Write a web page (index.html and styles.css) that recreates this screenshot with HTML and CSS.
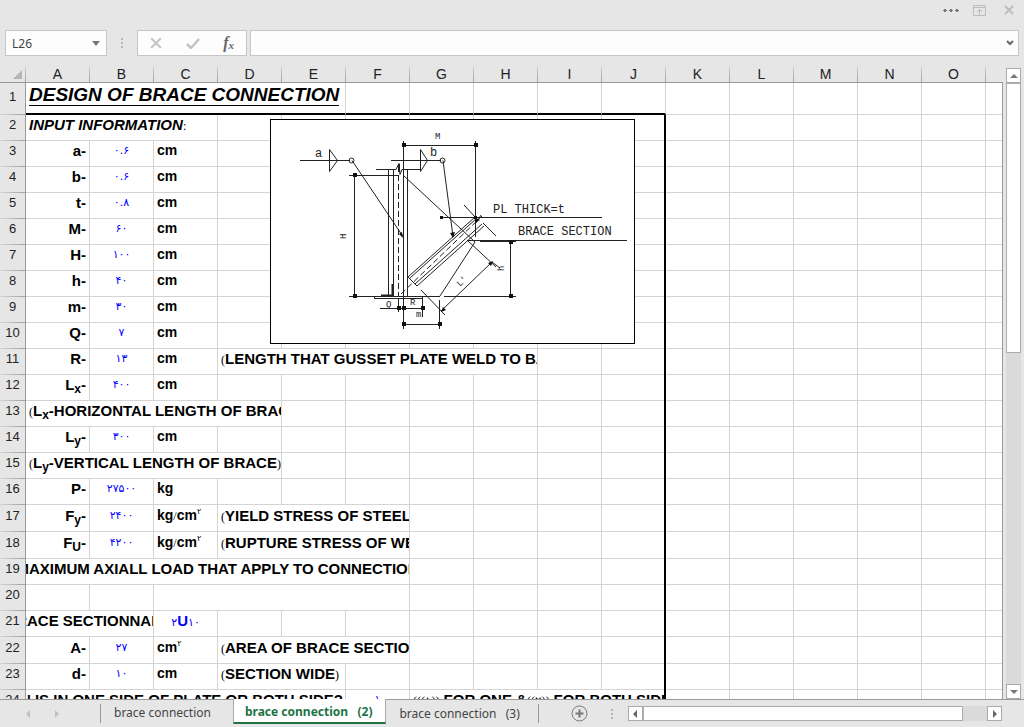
FILE: index.html
```html
<!DOCTYPE html>
<html lang="en">
<head>
  <meta charset="UTF-8" />
  <meta name="viewport" content="width=device-width, initial-scale=1" />
  <title>Brace Connection</title>
  <link rel="stylesheet" href="styles.css">
</head>
<body>

  <!-- Window controls -->
  <header class="title-bar">
    <button class="icon-btn" aria-label="More"><svg width="16" height="12" viewBox="0 0 16 12"><path d="M1 5h2v3H1zM0 6h4v1H0zM7 5h2v3H7zM6 6h4v1H6zM13 5h2v3h-2zM12 6h4v1h-4z" fill="#777"/></svg></button>
    <button class="icon-btn" aria-label="Ribbon display options"><svg width="13" height="11" viewBox="0 0 13 11" fill="none" stroke="#bdbdbd"><path d="M.5.5h12v10H.5zM.5 2.5h12M6.500 4.500v5M4 6.500l2.500-2 2.500 2"/></svg></button>
    <button class="icon-btn" aria-label="Close"><svg width="10" height="10" viewBox="0 0 10 10"><path d="M1 1l8 8M9 1l-8 8" stroke="#bdbdbd" stroke-width="2"/></svg></button>
  </header>

  <!-- Formula bar -->
  <div class="formula-bar">
    <div class="name-box">
      <input type="text" aria-label="Name box" value="L26" />
      <button class="icon-btn" aria-label="Show names"><svg width="8" height="5" viewBox="0 0 8 5"><path d="M0 0h8L4 5z" fill="#777"/></svg></button>
    </div>
    <svg class="grip" width="2" height="10" viewBox="0 0 2 10"><path d="M0 0h2v2H0zM0 4h2v2H0zM0 8h2v2H0z" fill="#b5b5b5"/></svg>
    <div class="formula-tools">
      <button class="icon-btn" aria-label="Cancel"><svg width="12" height="10" viewBox="0 0 12 10"><path d="M1 0l10 10M11 0L1 10" stroke="#c4c4c4" stroke-width="2"/></svg></button>
      <button class="icon-btn" aria-label="Enter"><svg width="14" height="11" viewBox="0 0 14 11"><path d="M1 6l4 4 8-9" fill="none" stroke="#c4c4c4" stroke-width="2.500"/></svg></button>
      <button class="icon-btn fx" aria-label="Insert function">f<small>x</small></button>
    </div>
    <div class="formula-box">
      <input type="text" aria-label="Formula" />
      <button class="icon-btn" aria-label="Expand formula bar"><svg width="8" height="6" viewBox="0 0 8 6"><path d="M1 1l3 3 3-3" fill="none" stroke="#666" stroke-width="2"/></svg></button>
    </div>
  </div>

  <main class="workspace">
    <div class="sheet">
      <table class="grid">
        <colgroup>
          <col class="col-head"><col span="15" class="col"><col>
        </colgroup>
        <thead>
          <tr><th class="corner"><svg width="9" height="9" viewBox="0 0 9 9"><path d="M9 0v9H0z" fill="#b5b5b5"/></svg></th><th>A</th><th>B</th><th>C</th><th>D</th><th>E</th><th>F</th><th>G</th><th>H</th><th>I</th><th>J</th><th>K</th><th>L</th><th>M</th><th>N</th><th>O</th><th></th></tr>
        </thead>
        <tbody>
          <tr class="title-row"><th>1</th><td colspan="5"><span class="title">DESIGN OF BRACE CONNECTION</span></td><td></td><td></td><td></td><td></td><td></td><td></td><td></td><td></td><td></td><td></td><td></td></tr>
          <tr><th>2</th><td colspan="3" class="heading">INPUT INFORMATION<i>:</i></td><td></td><td></td><td></td><td></td><td></td><td></td><td class="edge"></td><td></td><td></td><td></td><td></td><td></td><td></td></tr>
          <tr><th>3</th><td class="name">a-</td><td class="value">۰.۶</td><td class="unit">cm</td><td></td><td></td><td></td><td></td><td></td><td></td><td class="edge"></td><td></td><td></td><td></td><td></td><td></td><td></td></tr>
          <tr><th>4</th><td class="name">b-</td><td class="value">۰.۶</td><td class="unit">cm</td><td></td><td></td><td></td><td></td><td></td><td></td><td class="edge"></td><td></td><td></td><td></td><td></td><td></td><td></td></tr>
          <tr><th>5</th><td class="name">t-</td><td class="value">۰.۸</td><td class="unit">cm</td><td></td><td></td><td></td><td></td><td></td><td></td><td class="edge"></td><td></td><td></td><td></td><td></td><td></td><td></td></tr>
          <tr><th>6</th><td class="name">M-</td><td class="value">۶۰</td><td class="unit">cm</td><td></td><td></td><td></td><td></td><td></td><td></td><td class="edge"></td><td></td><td></td><td></td><td></td><td></td><td></td></tr>
          <tr><th>7</th><td class="name">H-</td><td class="value">۱۰۰</td><td class="unit">cm</td><td></td><td></td><td></td><td></td><td></td><td></td><td class="edge"></td><td></td><td></td><td></td><td></td><td></td><td></td></tr>
          <tr><th>8</th><td class="name">h-</td><td class="value">۴۰</td><td class="unit">cm</td><td></td><td></td><td></td><td></td><td></td><td></td><td class="edge"></td><td></td><td></td><td></td><td></td><td></td><td></td></tr>
          <tr><th>9</th><td class="name">m-</td><td class="value">۳۰</td><td class="unit">cm</td><td></td><td></td><td></td><td></td><td></td><td></td><td class="edge"></td><td></td><td></td><td></td><td></td><td></td><td></td></tr>
          <tr><th>10</th><td class="name">Q-</td><td class="value">۷</td><td class="unit">cm</td><td></td><td></td><td></td><td></td><td></td><td></td><td class="edge"></td><td></td><td></td><td></td><td></td><td></td><td></td></tr>
          <tr><th>11</th><td class="name">R-</td><td class="value">۱۳</td><td class="unit">cm</td><td colspan="5"><i>(</i>LENGTH THAT GUSSET PLATE WELD TO BASE PLATE<i>)</i></td><td></td><td class="edge"></td><td></td><td></td><td></td><td></td><td></td><td></td></tr>
          <tr><th>12</th><td class="name">L<sub>x</sub>-</td><td class="value">۴۰۰</td><td class="unit">cm</td><td></td><td></td><td></td><td></td><td></td><td></td><td class="edge"></td><td></td><td></td><td></td><td></td><td></td><td></td></tr>
          <tr><th>13</th><td colspan="4"><i>(</i>L<sub>x</sub>-HORIZONTAL LENGTH OF BRACE<i>)</i></td><td></td><td></td><td></td><td></td><td></td><td class="edge"></td><td></td><td></td><td></td><td></td><td></td><td></td></tr>
          <tr><th>14</th><td class="name">L<sub>y</sub>-</td><td class="value">۳۰۰</td><td class="unit">cm</td><td></td><td></td><td></td><td></td><td></td><td></td><td class="edge"></td><td></td><td></td><td></td><td></td><td></td><td></td></tr>
          <tr><th>15</th><td colspan="4" class="center"><i>(</i>L<sub>y</sub>-VERTICAL LENGTH OF BRACE<i>)</i></td><td></td><td></td><td></td><td></td><td></td><td class="edge"></td><td></td><td></td><td></td><td></td><td></td><td></td></tr>
          <tr><th>16</th><td class="name">P-</td><td class="value">۲۷۵۰۰</td><td class="unit">kg</td><td></td><td></td><td></td><td></td><td></td><td></td><td class="edge"></td><td></td><td></td><td></td><td></td><td></td><td></td></tr>
          <tr class="tall"><th>17</th><td class="name">F<sub>y</sub>-</td><td class="value">۲۴۰۰</td><td class="unit">kg<i>/</i>cm<sup>۲</sup></td><td colspan="3"><i>(</i>YIELD STRESS OF STEEL<i>)</i></td><td></td><td></td><td></td><td class="edge"></td><td></td><td></td><td></td><td></td><td></td><td></td></tr>
          <tr class="tall"><th>18</th><td class="name">F<sub>U</sub>-</td><td class="value">۴۲۰۰</td><td class="unit">kg<i>/</i>cm<sup>۲</sup></td><td colspan="3"><i>(</i>RUPTURE STRESS OF WELD<i>)</i></td><td></td><td></td><td></td><td class="edge"></td><td></td><td></td><td></td><td></td><td></td><td></td></tr>
          <tr><th>19</th><td colspan="6" class="wide"><div class="clip"><span><i>(</i>MAXIMUM AXIALL LOAD THAT APPLY TO CONNECTION<i>)</i></span></div></td><td></td><td></td><td></td><td class="edge"></td><td></td><td></td><td></td><td></td><td></td><td></td></tr>
          <tr><th>20</th><td></td><td></td><td colspan="4"></td><td></td><td></td><td></td><td class="edge"></td><td></td><td></td><td></td><td></td><td></td><td></td></tr>
          <tr><th>21</th><td colspan="2" class="wide"><div class="clip"><span>BRACE SECTIONNAME</span></div></td><td class="value">۲<b>U</b>۱۰</td><td></td><td></td><td></td><td></td><td></td><td></td><td class="edge"></td><td></td><td></td><td></td><td></td><td></td><td></td></tr>
          <tr class="tall"><th>22</th><td class="name">A-</td><td class="value">۲۷</td><td class="unit">cm<sup>۲</sup></td><td colspan="3"><i>(</i>AREA OF BRACE SECTION<i>)</i></td><td></td><td></td><td></td><td class="edge"></td><td></td><td></td><td></td><td></td><td></td><td></td></tr>
          <tr><th>23</th><td class="name">d-</td><td class="value">۱۰</td><td class="unit">cm</td><td colspan="2"><i>(</i>SECTION WIDE<i>)</i></td><td></td><td></td><td></td><td></td><td class="edge"></td><td></td><td></td><td></td><td></td><td></td><td></td></tr>
          <tr><th>24</th><td colspan="5" class="wide"><div class="clip clip-end"><span>CONNECTION IS IN ONE SIDE OF PLATE OR BOTH SIDE?</span></div></td><td class="value">۱</td><td colspan="4" class="edge"><i>(((۱))</i> FOR ONE &amp;<i>((۲))</i> FOR BOTH SIDE<i>)</i></td><td></td><td></td><td></td><td></td><td></td><td></td></tr>
        </tbody>
      </table>

      <!-- Connection drawing, floats over the cells -->
      <svg class="drawing" viewBox="271 120 363 223" role="img" aria-label="Brace connection detail">
        <g fill="none" stroke="#222" stroke-width="1">
          <!-- weld symbols and leaders -->
          <path d="M300 160.500h50M329.500 149.500v22l8-11zM391 160.500h50M420.500 149.500v22l7-11z"/>
          <circle cx="351.500" cy="160.500" r="2.500"/>
          <circle cx="442.500" cy="160.500" r="2.500"/>
          <path d="M352 160.500l51 76M443 160.500l10 76"/>
          <!-- column -->
          <path d="M376 169.500h20l3-6 1 11 2-5h18M388.500 169.500v127M393.500 169.500v127M403.500 141v188M407.500 169.500v127"/>
          <path d="M398.500 175v121" stroke-dasharray="6 3"/>
          <path d="M399 164v8M392.500 284v11M381 295.500h12" stroke-width="2"/>
          <path d="M374.500 296.500h48v2h-48z"/>
          <!-- gusset plate -->
          <path d="M403 175l72 67M467 240l29 27M475 242l-35 54" />
          <!-- brace -->
          <path d="M408 277l67-60M410 278l67-60M415 284l67-60M417 286l67-60M408 277l9 9M464 205l12 13M483 223l13 13M481 215l-5 8"/>
          <path d="M401 294l81-78" stroke-dasharray="6 3"/>
          <!-- text leaders -->
          <path d="M441 217.500h161M467 240.500h160M480 241.500h36"/>
          <!-- dimensions -->
          <path d="M403 145.500h72M475.500 141v96M349 175.500h49M354.500 175v121M349 296.500h91M444 296.500h72M510.500 241v55"/>
          <path d="M380 308.500h43M398.500 298v14M422.500 298v19M403 324.500h36M439.500 300v29M441 311l51-49M421 290l24 25M492 262l8 6"/>
        </g>
        <g fill="#111">
          <path d="M402 143h4v4h-4zM474 143h4v4h-4zM353 173h4v4h-4zM353 294h4v4h-4zM509 240h4v4h-4zM509 294h4v4h-4zM397 306h4v4h-4zM402 306h4v4h-4zM421 306h4v4h-4zM402 322h4v4h-4zM438 322h4v4h-4zM440 216h3v3h-3zM474 216h3v3h-3z"/>
          <path d="M403 238l-4-4 3-2zM453 238l-3-5 5-1zM441 312l2-5 3 3zM493 261l-5 2 3 3zM475 223l1-5 4 2z"/>
        </g>
        <g class="drawing-text">
          <text x="493" y="213">PL THICK=t</text>
          <text x="518" y="235">BRACE SECTION</text>
          <text x="315" y="157">a</text>
          <text x="430" y="156">b</text>
          <g class="drawing-small">
            <text x="435" y="139">M</text>
            <text x="386" y="307">Q</text>
            <text x="410" y="305">R</text>
            <text x="416" y="317">m</text>
            <text transform="translate(346 239) rotate(-90)">H</text>
            <text transform="translate(460 287) rotate(-45)">L'</text>
            <text transform="translate(504 271) rotate(-90)">h</text>
          </g>
        </g>
      </svg>
    </div>

    <div class="scroll scroll-v">
      <button aria-label="Scroll up"><svg width="8" height="4" viewBox="0 0 8 4"><path d="M0 4l4-4 4 4z" fill="#777"/></svg></button>
      <div class="track"><div class="thumb"></div></div>
      <button aria-label="Scroll down"><svg width="8" height="4" viewBox="0 0 8 4"><path d="M0 0h8L4 4z" fill="#777"/></svg></button>
    </div>
  </main>

  <!-- Sheet tabs -->
  <footer class="tab-bar">
    <div class="tab-nav">
      <button class="icon-btn" aria-label="Previous sheet"><svg width="4" height="8" viewBox="0 0 4 8"><path d="M4 0v8L0 4z" fill="#c0c0c0"/></svg></button>
      <button class="icon-btn" aria-label="Next sheet"><svg width="4" height="8" viewBox="0 0 4 8"><path d="M0 0v8l4-4z" fill="#c0c0c0"/></svg></button>
    </div>
    <button class="tab">brace connection</button>
    <button class="tab active">brace connection &nbsp;&nbsp;(2)</button>
    <button class="tab last">brace connection &nbsp;&nbsp;(3)</button>
    <button class="icon-btn add" aria-label="New sheet"><svg width="17" height="17" viewBox="0 0 17 17" fill="none" stroke="#777"><circle cx="8.500" cy="8.500" r="7.500"/><path d="M8.500 4.500v8M4.500 8.500h8" stroke-width="2"/></svg></button>
    <svg class="grip" width="2" height="10" viewBox="0 0 2 10"><path d="M0 0h2v2H0zM0 4h2v2H0zM0 8h2v2H0z" fill="#b5b5b5"/></svg>
    <div class="scroll scroll-h">
      <button aria-label="Scroll left"><svg width="4" height="8" viewBox="0 0 4 8"><path d="M4 0v8L0 4z" fill="#666"/></svg></button>
      <div class="track"><div class="thumb"></div></div>
      <button aria-label="Scroll right"><svg width="4" height="8" viewBox="0 0 4 8"><path d="M0 0v8l4-4z" fill="#666"/></svg></button>
    </div>
  </footer>

</body>
</html>
```
FILE: styles.css
```css
* {
  box-sizing: border-box;
}

body {
  margin: 0;
  height: 100vh;
  display: flex;
  flex-direction: column;
  background-color: #e6e6e6;
  color: #444;
  font-family: 'Noto Sans', 'Open Sans', sans-serif;
  font-size: 12px;
  overflow: hidden;
}

button,
input {
  font: inherit;
  color: inherit;
  border: none;
  margin: 0;
  padding: 0;
}

svg {
  display: block;
}

.icon-btn {
  display: flex;
  align-items: center;
  justify-content: center;
  background: none;
}

/* Window controls */
.title-bar {
  display: flex;
  justify-content: flex-end;
  align-items: center;
  gap: 18px;
  height: 20px;
  margin-bottom: 10px;
  padding-right: 10px;
}

.title-bar .icon-btn:first-child {
  margin-right: -4px;
}

/* Formula bar */
.formula-bar {
  display: flex;
  align-items: stretch;
  height: 26px;
  margin: 0 5px 10px;
}

.name-box,
.formula-tools,
.formula-box {
  display: flex;
  align-items: center;
  background-color: #fdfdfd;
  border: 1px solid #c6c6c6;
}

.name-box {
  width: 102px;
  padding: 0 6px;
}

.name-box input,
.formula-box input {
  flex: 1;
  min-width: 0;
  background: none;
  outline: none;
}

.grip {
  flex: none;
  align-self: center;
}

.formula-bar .grip {
  margin: 0 14px;
}

.formula-tools {
  width: 110px;
  justify-content: space-between;
  padding: 0 12px;
  margin-right: 3px;
}

.fx {
  font-family: 'Liberation Serif', serif;
  font-style: italic;
  font-weight: bold;
  font-size: 16px;
  line-height: 16px;
  color: #666;
}

.fx small {
  font-size: 11px;
  padding-top: 4px;
}

.formula-box {
  flex: 1;
  padding: 0 4px;
}

/* Sheet */
.workspace {
  flex: 1;
  min-height: 0;
  display: flex;
}

.sheet {
  position: relative;
  flex: 1;
  min-width: 0;
  overflow: hidden;
}

.sheet::after {
  content: "";
  position: absolute;
  top: 16px;
  right: 0;
  bottom: 0;
  border-right: 1px solid #999;
}

.grid {
  width: 100%;
  table-layout: fixed;
  border-collapse: separate;
  border-spacing: 0;
  font-family: 'Liberation Sans', 'DejaVu Sans', sans-serif;
  color: #000;
}

.col-head {
  width: 26px;
}

.col {
  width: 64px;
}

.grid th {
  padding: 0;
  font-size: 14px;
  font-weight: normal;
  line-height: 19px;
  text-align: center;
  vertical-align: top;
  color: #222;
  background-color: #e6e6e6;
}

.grid thead th {
  height: 17px;
  padding-right: 1px;
  line-height: 16px;
  border-bottom: 1px solid #999;
  background: linear-gradient(#d4d4d4, #a0a0a0) right / 1px 100% no-repeat;
}

.grid thead th:last-child {
  background: none;
}

.corner svg {
  margin: 4px 0 0 13px;
}

.grid tbody th {
  font-size: 13px;
  border-right: 1px solid #999;
  background: linear-gradient(to right, #d4d4d4, #a0a0a0) bottom / 100% 1px no-repeat;
}

.grid td {
  height: 26px;
  padding: 0 3px;
  border-right: 1px solid #d4d4d4;
  border-bottom: 1px solid #d4d4d4;
  background-color: #fff;
  font-size: 15px;
  font-weight: bold;
  line-height: 19px;
  white-space: nowrap;
  vertical-align: top;
  overflow: hidden;
}

.grid .tall td {
  height: 27px;
}

.grid .tall th,
.grid .tall td {
  line-height: 21px;
}

.grid .title-row td {
  height: 32px;
  padding-top: 2px;
}

.grid .title-row th {
  padding-top: 4px;
}

/* Heavy frame round the calculation area */
.grid .title-row td:nth-child(-n+7) {
  border-bottom: 2px solid #000;
}

.grid td.edge {
  border-right: 2px solid transparent;
  border-bottom-color: transparent;
  background:
    linear-gradient(#000, #000) right / 2px 100% no-repeat,
    linear-gradient(#d4d4d4, #d4d4d4) bottom / 100% 1px no-repeat,
    #fff;
  background-origin: border-box;
}

.title {
  display: inline-block;
  font-size: 19px;
  font-style: italic;
  line-height: 20px;
  border-bottom: 1px solid #000;
}

.grid .heading {
  font-style: italic;
}

.grid .name {
  text-align: right;
}

.grid .unit {
  font-size: 14px;
}

.grid .center {
  text-align: center;
}

.grid .wide {
  padding: 0;
}

.grid .value {
  color: #00f;
  font-family: 'DejaVu Sans', sans-serif;
  font-size: 11px;
  font-weight: normal;
  text-align: center;
}

.value b {
  font-family: 'Liberation Sans', sans-serif;
  font-size: 15px;
}

.grid i {
  font-family: 'Liberation Serif', 'DejaVu Sans', serif;
  font-size: 12px;
  font-style: normal;
  font-weight: normal;
}

.grid sub,
.grid sup {
  font-size: 12px;
  line-height: 0;
}

.grid sub {
  vertical-align: -3px;
}

.grid sup {
  font-size: 8px;
  font-weight: normal;
}

/* Text wider than its merged cell, cut at both ends */
.clip {
  display: flex;
  justify-content: center;
  overflow: hidden;
}

.clip-end {
  justify-content: flex-end;
  padding-right: 2px;
}

.drawing {
  position: absolute;
  left: 270px;
  top: 53px;
  width: 365px;
  height: 225px;
  border: 1px solid #000;
  background-color: #fff;
}

.drawing-text {
  font-family: 'Liberation Mono', monospace;
  font-size: 12px;
  fill: #222;
}

.drawing-small {
  font-size: 9px;
}

/* Scroll bars */
.scroll {
  display: flex;
}

.scroll button {
  flex: none;
  display: flex;
  align-items: center;
  justify-content: center;
  width: 15px;
  height: 15px;
  background-color: #fff;
  border: 1px solid #ababab;
}

.track {
  flex: 1;
  background-color: #dadada;
}

.thumb {
  background-color: #fff;
  border: 1px solid #ababab;
}

.scroll-v {
  flex-direction: column;
  width: 15px;
  margin: 2px 3px 0;
}

.scroll-v .thumb {
  height: 45%;
}

.scroll-h {
  flex: 1;
  height: 15px;
  margin: 6px 22px 0 0;
}

.scroll-h .thumb {
  width: 93%;
  height: 100%;
}

/* Sheet tabs */
.tab-bar {
  display: flex;
  height: 28px;
  border-top: 1px solid #999;
}

.tab-nav {
  display: flex;
  align-items: center;
  justify-content: center;
  gap: 25px;
  width: 101px;
  height: 19px;
  margin-top: 4px;
  padding-right: 15px;
  border-right: 1px solid #999;
}

.tab {
  height: 25px;
  padding: 0 22px 0 13px;
  background: none;
  font-size: 12px;
  line-height: 25px;
  white-space: nowrap;
}

.tab.active {
  margin-top: -1px;
  padding: 0 13px 0 11px;
  background-color: #fff;
  border: 1px solid #ababab;
  border-width: 0 1px 2px;
  border-bottom-color: #217346;
  color: #217346;
  font-weight: bold;
}

.tab.last {
  height: 19px;
  margin-top: 4px;
  padding-right: 18px;
  line-height: 17px;
  border-right: 1px solid #999;
}

.add {
  margin: 5px 23px 0 32px;
  height: 17px;
}

.tab-bar .grip {
  margin-right: 15px;
}
```
